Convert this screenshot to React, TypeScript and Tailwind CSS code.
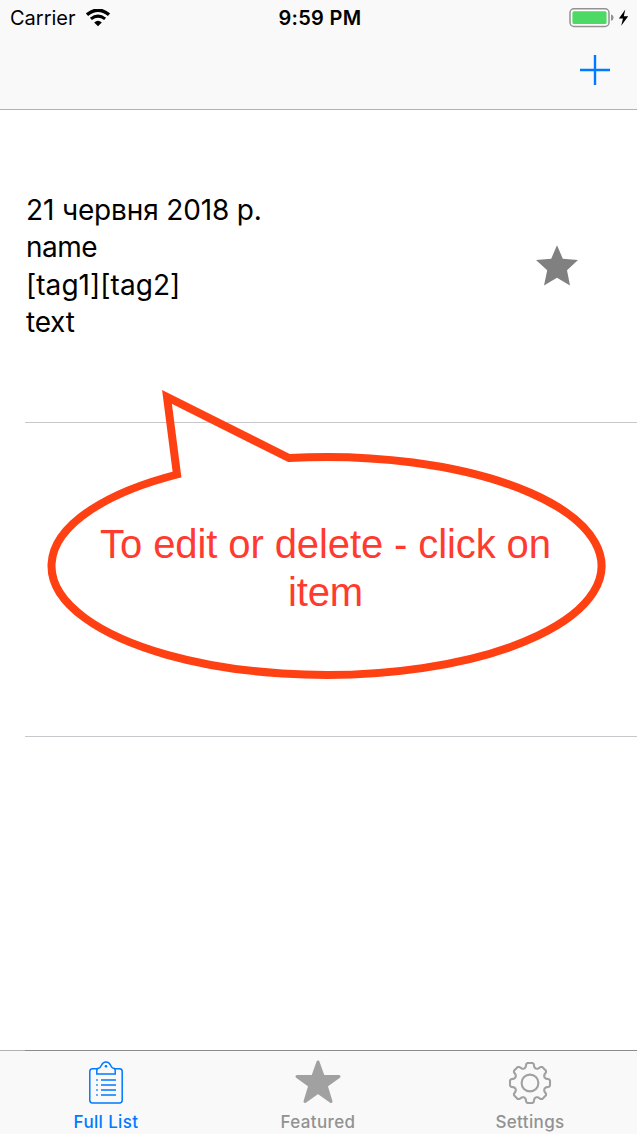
import type { ReactNode } from 'react';

const GEAR_TEETH = [0, 45, 90, 135, 180, 225, 270, 315];

function gearPath(): string {
  const tooth = [
    [-5.6, -14.6],
    [-4.4, -15.8],
    [-3.7, -19],
    [-2.6, -20],
    [2.6, -20],
    [3.7, -19],
    [4.4, -15.8],
    [5.6, -14.6],
  ];
  const points = GEAR_TEETH.flatMap((deg) => {
    const a = (deg * Math.PI) / 180;
    return tooth.map(([x, y]) => {
      const px = x * Math.cos(a) - y * Math.sin(a);
      const py = x * Math.sin(a) + y * Math.cos(a);
      return `${px.toFixed(2)} ${py.toFixed(2)}`;
    });
  });
  return `M${points.join('L')}Z`;
}

function StatusBar() {
  return (
    <div className="grid h-[36px] grid-cols-3 items-center pl-[10px] pr-[7px] text-[20px] leading-[36px] text-black">
      <div className="flex items-center">
        <span className="w-[76px] whitespace-nowrap tracking-[0px]">Carrier</span>
        <svg width="24" height="18" viewBox="0 0 24 18" fill="none" stroke="#000">
          <path d="M1 5.7Q12 -3.4 23 5.7" strokeWidth="3.4" />
          <path d="M4.9 9.9Q12 4.3 19.1 9.9" strokeWidth="3.1" />
          <path d="M8.2 13.4Q12 10.1 15.8 13.4L12 17.2Z" fill="#000" stroke="none" />
        </svg>
      </div>
      <div className="text-center font-semibold tracking-[0.3px] whitespace-nowrap">9:59 PM</div>
      <div className="flex items-center justify-end">
        <svg width="61" height="22" viewBox="0 0 61 22">
          <rect x="1" y="1.8" width="39" height="17.6" rx="4" fill="#fff" stroke="#929292" strokeWidth="1.5" />
          <rect x="3.4" y="4.2" width="34.2" height="12.8" rx="1.6" fill="#4cd964" />
          <path d="M42 7.5Q44.6 8 44.6 10.6Q44.6 13.2 42 13.8Z" fill="#929292" />
          <path d="M56.3 2.4L49.9 11.4H54L52.2 18.7L59.2 9.2H54.8Z" fill="#000" />
        </svg>
      </div>
    </div>
  );
}

function Callout() {
  return (
    <div className="absolute left-[40px] top-[380px] flex h-[308px] w-[574px] justify-center">
      <svg className="absolute inset-0" width="574" height="308" viewBox="40 380 574 308">
        <path
          d="M177 474.5L167 397L289 458A275 109 0 1 1 177 474.5Z"
          fill="none"
          stroke="#ff4013"
          strokeWidth="8"
          strokeMiterlimit="10"
        />
      </svg>
      <p className="relative mt-[139.5px] mr-[3px] w-[480px] text-center font-['Liberation_Sans',sans-serif] text-[40px] leading-[48px] tracking-[-0.1px] text-[#ff3b30]">
        To edit or delete - click on item
      </p>
    </div>
  );
}

function Tab({ label, active, children }: { label: string; active?: boolean; children: ReactNode }) {
  return (
    <button
      className={
        active
          ? 'flex w-[212px] flex-col items-center text-[#007aff]'
          : 'flex w-[212px] flex-col items-center text-[#929292]'
      }
    >
      <span className="flex h-[60px] w-[60px] items-center justify-center">{children}</span>
      <span className="text-[17px] font-medium leading-[22px] tracking-[0.35px]">{label}</span>
    </button>
  );
}

export default function App() {
  return (
    <div className="relative flex h-[1134px] w-[637px] flex-col overflow-hidden bg-white font-['Inter',sans-serif]">
      <header className="h-[110px] border-b border-[#b2b2b2] bg-[#f9f9f9]">
        <StatusBar />
        <div className="flex justify-end pr-[27px] pt-[19px]">
          <svg width="30" height="30" viewBox="0 0 30 30" stroke="#007aff" strokeWidth="2.4">
            <path d="M0 15H30M15 0V30" />
          </svg>
        </div>
      </header>

      <main className="flex-1 pl-[25px]">
        <div className="flex h-[313px] items-center justify-between border-b border-[#c8c7cc] pr-[58px]">
          <div className="pl-px pt-px text-[28px] leading-[37.5px] text-black">
            <p className="tracking-[-0.15px]">21 червня 2018 р.</p>
            <p className="tracking-[-0.5px]">name</p>
            <p className="tracking-[0.05px]">[tag1][tag2]</p>
            <p className="tracking-[-0.25px]">text</p>
          </div>
          <svg width="44" height="42" viewBox="0 0 44 42">
            <path
              d="M22 0.3L27.8 13.7L43 15L32 25.2L35 40.4L22 32.7L9 40.4L12.2 25.2L1 15L16.2 13.7Z"
              fill="#808080"
            />
          </svg>
        </div>
        <div className="h-[314px] border-b border-[#c8c7cc]" />
      </main>

      <div className="flex h-px">
        <div className="w-[25px] bg-[#b2b2b2]" />
        <div className="flex-1 bg-[#8c8c8c]" />
      </div>
      <nav className="flex h-[83px] bg-[#f9f9f9]">
        <Tab label="Full List" active>
          <svg className="mt-[3px]" width="34" height="43" viewBox="0 0 34 43" fill="none" stroke="currentColor" strokeWidth="1.5">
            <path d="M8 7.8H3.5Q0.8 7.8 0.8 10.5V39.3Q0.8 42 3.5 42H30.5Q33.2 42 33.2 39.3V10.5Q33.2 7.8 30.5 7.8H26" />
            <path d="M7.8 13V9.5Q7.8 7.2 10.2 7C12.5 6.7 12 1 17 1S21.5 6.7 23.8 7Q26.2 7.2 26.2 9.5V13Z" />
            <circle cx="17" cy="5.3" r="1.3" fill="currentColor" stroke="none" />
            <path d="M12 19H27M12 24H27M12 29H27M12 34H27M7.2 19H8.8M7.2 24H8.8M7.2 29H8.8M7.2 34H8.8" />
          </svg>
        </Tab>
        <Tab label="Featured">
          <svg className="mt-px" width="48" height="46" viewBox="0 0 48 46">
            <path
              d="M24 3L29.2 17.5H45L32.2 26.7L37 42.5L24 33.2L11 42.5L15.8 26.7L3 17.5H18.8Z"
              fill="#a1a1a1"
              stroke="#a1a1a1"
              strokeWidth="3"
              strokeLinejoin="round"
            />
          </svg>
        </Tab>
        <Tab label="Settings">
          <svg className="mt-1" width="44" height="44" viewBox="-22 -22 44 44" fill="none" stroke="#a1a1a1" strokeWidth="2.1" strokeLinejoin="round">
            <path d={gearPath()} />
            <circle r="8.4" />
          </svg>
        </Tab>
      </nav>
      <Callout />
    </div>
  );
}
